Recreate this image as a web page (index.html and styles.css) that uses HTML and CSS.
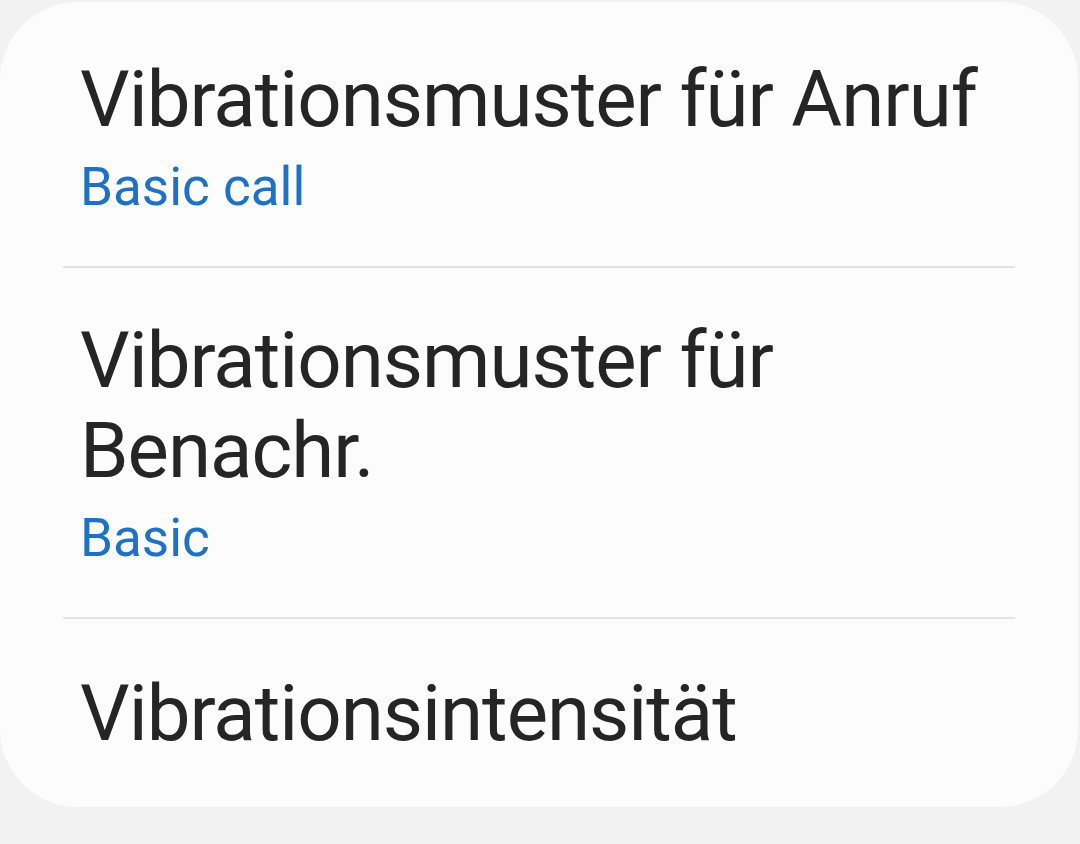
FILE: index.html
```html
<!DOCTYPE html>
<html lang="de">
<head>
    <meta charset="UTF-8">
    <meta name="viewport" content="width=device-width, initial-scale=1.0">
    <title>Vibration</title>
    <link rel="stylesheet" href="styles.css">
</head>
<body>
    <div class="settings-card">
        <div class="setting-item">
            <div class="setting-title">Vibrationsmuster für Anruf</div>
            <div class="setting-value">Basic call</div>
        </div>
        <div class="setting-item">
            <div class="setting-title">Vibrationsmuster für Benachr.</div>
            <div class="setting-value">Basic</div>
        </div>
        <div class="setting-item">
            <div class="setting-title">Vibrationsintensität</div>
        </div>
    </div>
</body>
</html>
```

FILE: styles.css
```css
body {
    margin: 0;
    background: #f2f2f2;
    font-family: Roboto, "Noto Sans", sans-serif;
}
.settings-card {
    margin: 2px 2px 0 0;
    padding: 0 63px;
    height: 805px;
    box-sizing: border-box;
    background: #fcfcfc;
    border-radius: 78px;
}
.setting-item {
    padding: 48px 0 47px 17px;
    border-bottom: 2px solid #e3e3e3;
}
.setting-item:first-child {
    padding-top: 53px;
}
.setting-item:last-child {
    padding-top: 50px;
    border-bottom: none;
}
.setting-title {
    font-size: 78px;
    line-height: 90px;
    letter-spacing: -1px;
    color: #252525;
}
.setting-value {
    margin-top: 10px;
    font-size: 53px;
    line-height: 64px;
    color: #1d72c6;
}
```
